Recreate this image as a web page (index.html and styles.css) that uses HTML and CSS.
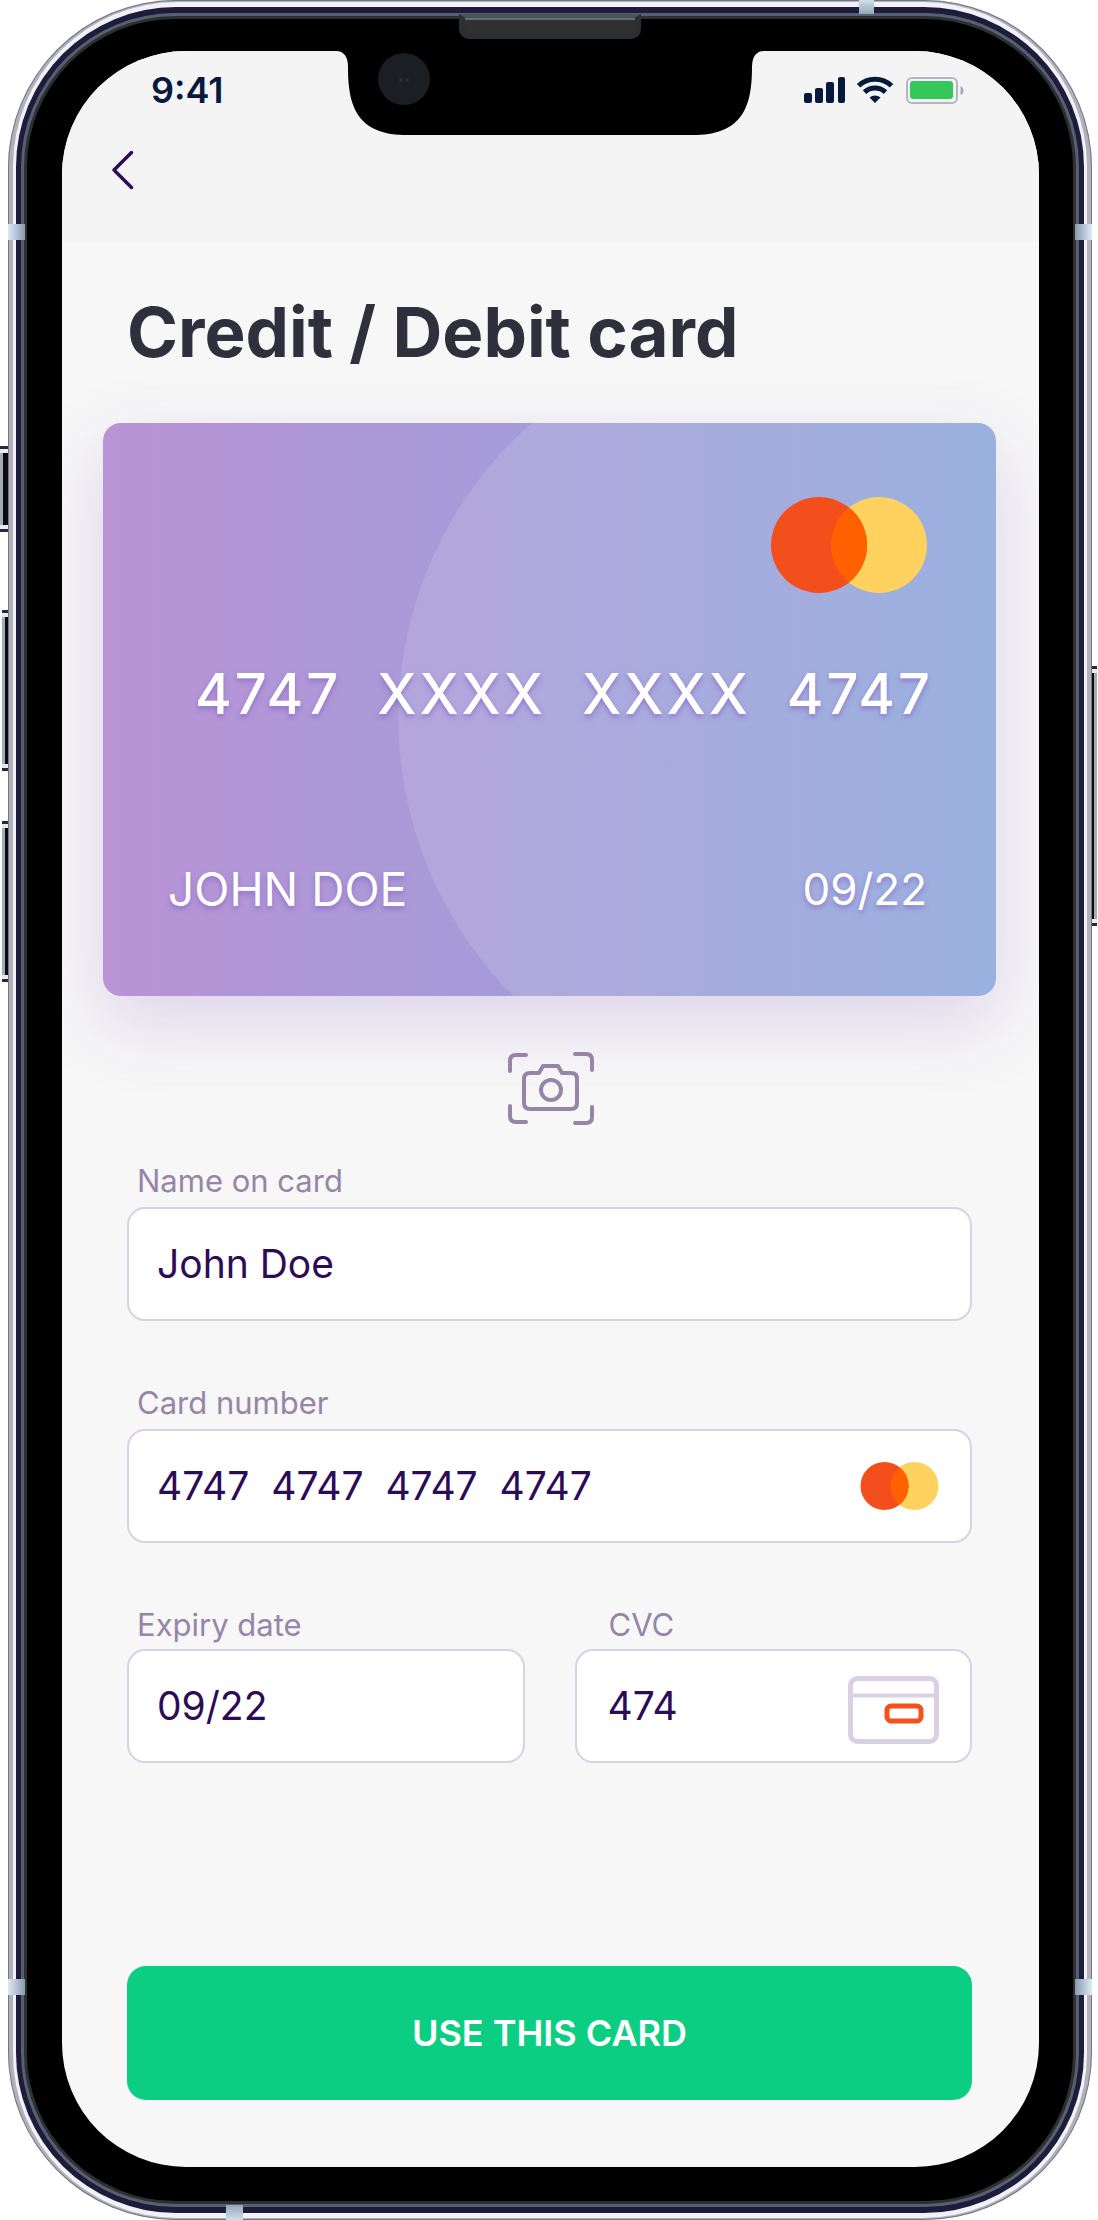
FILE: index.html
```html
<!DOCTYPE html>
<html lang="en">
<head>
  <meta charset="utf-8">
  <meta name="viewport" content="width=device-width, initial-scale=1">
  <title>Credit / Debit card</title>
  <link rel="stylesheet" href="styles.css">
</head>
<body>
  <div class="phone">
    <span class="key key-mute"></span>
    <span class="key key-up"></span>
    <span class="key key-down"></span>
    <span class="key key-power"></span>
    <div class="edge"><div class="rim"><div class="band"><div class="bezel">
      <main class="screen">
        <header class="topbar">
          <div class="status">
            <span class="time">9:41</span>
            <svg class="status-icons" width="160" height="28" viewBox="0 0 160 28" aria-label="Signal, Wi-Fi, battery">
              <g fill="#071a3d">
                <rect x="0" y="17" width="8" height="10" rx="2"/>
                <rect x="11" y="12" width="8" height="15" rx="2"/>
                <rect x="22" y="6" width="8" height="21" rx="2"/>
                <rect x="34" y="1" width="7" height="26" rx="2"/>
                <path d="M71 27l-5.500-5.500a8.500 8.500 0 0 1 11 0z"/>
              </g>
              <g fill="none" stroke="#071a3d" stroke-width="5">
                <path d="M54.500 9.800a24 24 0 0 1 33 0"/>
                <path d="M60.500 16.200a15.500 15.500 0 0 1 21 0"/>
              </g>
              <rect x="103" y="2" width="50" height="25" rx="5" fill="none" stroke="#b3b5c1" stroke-width="2"/>
              <rect x="106" y="5" width="43" height="18" rx="3" fill="#35c759"/>
              <path d="M156.500 10v9q3-1.500 3-4.500t-3-4.500z" fill="#a4a7b4"/>
            </svg>
          </div>
          <a class="back" href="#" aria-label="Back">
            <svg width="24" height="40" viewBox="0 0 24 40"><path d="M20.500 2.500L3 20l17.500 17.500" fill="none" stroke="#2d0c57" stroke-width="3.500" stroke-linecap="round" stroke-linejoin="round"/></svg>
          </a>
        </header>

        <h1>Credit / Debit card</h1>

        <section class="card" aria-label="Card preview">
          <svg class="card-logo" width="156" height="96" viewBox="0 0 156 96" aria-label="Mastercard">
            <circle cx="108" cy="48" r="48" fill="#ffd15f"/><circle cx="48" cy="48" r="48" fill="#f34f1c"/>
            <path d="M78 10.500a48 48 0 0 1 0 75a48 48 0 0 1 0-75z" fill="#ff6000"/>
          </svg>
          <p class="card-number">4747&nbsp; XXXX&nbsp; XXXX&nbsp; 4747</p>
          <div class="card-foot"><span>JOHN DOE</span><span class="card-date">09/22</span></div>
        </section>

        <button class="scan" type="button" aria-label="Scan card">
          <svg width="86" height="74" viewBox="0 0 86 74" fill="none" stroke="#9586a8" stroke-width="4" stroke-linecap="round" stroke-linejoin="round">
            <path d="M18 3H8q-6 0-6 6v10M67 2h11q6 0 6 6v10M2 54v10q0 6 6 6h10M84 55v10q0 6-6 6H67"/>
            <path d="M22 21h9l4-7h15l4 7h9q6 0 6 6v24q0 6-6 6H22q-6 0-6-6V27q0-6 6-6z"/>
            <circle cx="43" cy="38" r="10"/>
          </svg>
        </button>

        <form class="form">
          <div class="field">
            <label for="name">Name on card</label>
            <div class="box"><input id="name" type="text" value="John Doe"></div>
          </div>
          <div class="field">
            <label for="number">Card number</label>
            <div class="box">
              <input id="number" type="text" value="4747&nbsp; 4747&nbsp; 4747&nbsp; 4747">
              <svg class="mini-logo" width="79" height="48" viewBox="0 0 156 96" aria-hidden="true">
                <circle cx="108" cy="48" r="48" fill="#ffd15f"/><circle cx="48" cy="48" r="48" fill="#f34f1c"/>
                <path d="M78 10.500a48 48 0 0 1 0 75a48 48 0 0 1 0-75z" fill="#ff6000"/>
              </svg>
            </div>
          </div>
          <div class="pair">
            <div class="field">
              <label for="expiry">Expiry date</label>
              <div class="box"><input id="expiry" type="text" value="09/22"></div>
            </div>
            <div class="field field-cvc">
              <label for="cvc">CVC</label>
              <div class="box">
                <input id="cvc" type="text" value="474">
                <svg width="91" height="76" viewBox="0 -8 91 76" fill="none" aria-hidden="true">
                  <rect x="2.500" y="2.500" width="86" height="63" rx="7" stroke="#dad0e3" stroke-width="5"/>
                  <path d="M3 19.500h85" stroke="#dad0e3" stroke-width="4"/>
                  <rect x="39" y="30" width="34" height="15" rx="4" stroke="#f4511f" stroke-width="5"/>
                </svg>
              </div>
            </div>
          </div>
          <button class="submit" type="submit">USE THIS CARD</button>
        </form>
      </main>
    </div></div></div></div>
    <svg class="notch" width="428" height="86" viewBox="0 0 428 86" aria-hidden="true">
      <path d="M0 0V2C8 2 12 8 12 18C12 52 18 85 68 86H360C410 85 416 52 416 18C416 8 420 2 428 2V0z" fill="#000"/>
      <circle cx="68" cy="30" r="26" fill="#1b1e22"/>
      <circle cx="65" cy="31" r="2" fill="#2c2f34"/><circle cx="71" cy="31" r="2" fill="#26284a"/>
    </svg>
    <span class="speaker"></span>
    <span class="seam seam-left seam-upper"></span>
    <span class="seam seam-right seam-upper"></span>
    <span class="seam seam-left seam-lower"></span>
    <span class="seam seam-right seam-lower"></span>
    <span class="seam seam-top"></span>
    <span class="seam seam-bottom"></span>
  </div>
</body>
</html>
```
FILE: styles.css
```css
* { box-sizing: border-box; }

body {
  margin: 0;
  background: #fff;
  font-family: Inter, "Liberation Sans", sans-serif;
}

/* Phone shell: nested rings of metal around a black bezel */
.phone {
  position: relative;
  display: flex;
  min-height: 100vh;
  padding: 0 6px 0 8px;
}
.edge, .rim, .band, .bezel { display: flex; flex: 1; min-width: 0; }
.edge { position: relative; padding: 2px 5px; border-radius: 168px; background: #b2b1ba; box-shadow: inset 0 0 0 1px #77748a; }
.rim { padding: 5px 3px; border-radius: 164px; background: #f1f2f5; }
.band { padding: 6px 5px; border-radius: 160px; background: #1f1b3d; }
.bezel {
  padding: 38px 40px 40px 41px;
  border-radius: 154px;
  background: #000;
  box-shadow: inset 0 0 0 3px #566070, inset 0 0 0 6px #2c3033;
}
.screen {
  display: flex;
  flex: 1;
  flex-direction: column;
  min-width: 0;
  overflow: hidden;
  border-radius: 124px;
  background: #f7f7f7;
}

.key { position: absolute; left: 2px; width: 10px; background: #0a0916; border: solid #a5adb0; border-width: 0 0 0 3px; box-shadow: 0 -4px 0 #e8ecf0, 0 4px 0 #e8ecf0, 0 -7px 0 #2b2838, 0 7px 0 #2b2838; }
.key-mute { left: 0; top: 453px; height: 72px; }
.key-up { top: 617px; height: 147px; }
.key-down { top: 828px; height: 147px; }
.key-power { left: auto; right: 1px; top: 673px; height: 246px; border-width: 0 3px 0 0; }

.notch { position: absolute; top: 49px; left: 50%; margin-left: -213px; }
.speaker {
  position: absolute;
  top: 14px;
  left: 50%;
  width: 182px;
  height: 25px;
  margin-left: -90px;
  border: 6px solid #2b2f31;
  border-top: 4px solid #4a525a;
  border-radius: 0 0 10px 10px;
  background: #303232;
  box-shadow: inset 0 2px 0 #6a6c6b;
}
.seam { position: absolute; width: 17px; height: 16px; }
.seam-left { left: 8px; background: linear-gradient(90deg, #dfeaf4, #b9cbde 40%, #8b98aa); }
.seam-right { right: 6px; background: linear-gradient(270deg, #dfeaf4, #b9cbde 40%, #8b98aa); }
.seam-upper { top: 224px; }
.seam-lower { bottom: 225px; }
.seam-top { top: 0; right: 224px; width: 15px; height: 14px; background: linear-gradient(#cfdfed, #98a5b6); }
.seam-bottom { bottom: 0; left: 226px; height: 15px; background: linear-gradient(#98a5b6, #cfdfed); }

/* Top bar */
.topbar { height: 190px; padding-top: 19px; background: #f4f4f4; }
.status {
  display: flex;
  align-items: center;
  justify-content: space-between;
  padding: 0 75px 0 89px;
}
.time { font-size: 36px; line-height: 40px; font-weight: 600; color: #071a3d; }
.back { display: block; width: 24px; height: 40px; margin: 40px 0 0 49px; }
.back svg, .scan svg { display: block; }

h1 {
  margin: 47px 65px 0;
  font-size: 69px;
  line-height: 88px;
  font-weight: 700;
  color: #302f3c;
}

/* Card preview */
.card {
  display: flex;
  flex-direction: column;
  height: 573px;
  flex-shrink: 0;
  margin: 47px 43px 0 41px;
  padding: 74px 69px 79px 65px;
  border-radius: 18px;
  color: #fff;
  background:
    radial-gradient(circle at 689px 295px, rgba(255, 255, 255, .12) 393px, transparent 394px),
    linear-gradient(90deg, #b993d6, #8ca6db);
  box-shadow: 0 26px 72px rgba(142, 101, 192, .24);
  text-shadow: 0 3px 5px rgba(120, 80, 190, .5);
}
.card-logo { align-self: flex-end; flex-shrink: 0; }
.card-number {
  margin: 67px -6px 0 0;
  font-size: 56px;
  line-height: 68px;
  font-weight: 500;
  letter-spacing: 3px;
  text-align: right;
  white-space: nowrap;
}
.card-foot {
  display: flex;
  justify-content: space-between;
  margin-top: auto;
  font-size: 46px;
  line-height: 56px;
}
.card-date { font-size: 44px; }

.scan {
  align-self: center;
  width: 86px;
  height: 74px;
  margin-top: 56px;
  padding: 0;
  border: 0;
  background: none;
}

/* Form */
.form {
  display: flex;
  flex: 1;
  flex-direction: column;
  gap: 62px;
  padding: 35px 67px 67px 65px;
}
.field { display: flex; flex-direction: column; gap: 6px; min-width: 0; }
.field label {
  padding-left: 10px;
  font-size: 31px;
  line-height: 40px;
  color: #9586a8;
}
.box {
  display: flex;
  align-items: center;
  height: 114px;
  padding: 0 31px 0 28px;
  border: 2px solid #dad1e6;
  border-radius: 18px;
  background: #fff;
}
.box svg { flex-shrink: 0; }
.box input {
  flex: 1;
  min-width: 0;
  padding: 0;
  border: 0;
  outline: 0;
  background: none;
  font: 400 39px/48px Inter, "Liberation Sans", sans-serif;
  color: #2d0c57;
}
.pair { display: grid; grid-template-columns: 1fr 1fr; gap: 50px; }
.pair .field { gap: 4px; }
.field-cvc label { padding-left: 34px; }
.field-cvc .box { padding-left: 31px; }

.submit {
  height: 134px;
  margin-top: auto;
  border: 0;
  border-radius: 19px;
  background: #0bce83;
  font: 600 36px/44px Inter, "Liberation Sans", sans-serif;
  color: #fff;
}
```
